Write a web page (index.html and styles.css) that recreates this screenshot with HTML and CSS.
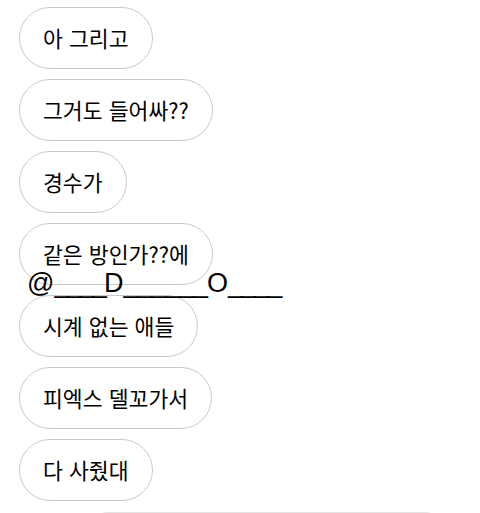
FILE: index.html
```html
<!DOCTYPE html>
<html lang="ko">
<head>
<meta charset="utf-8">
<link rel="stylesheet" href="styles.css">
</head>
<body>
<div class="chat">
  <div class="bubble">아 그리고</div>
  <div class="bubble">그거도 들어싸??</div>
  <div class="bubble">경수가</div>
  <div class="bubble">같은 방인가??에</div>
  <div class="bubble">시계 없는 애들</div>
  <div class="bubble">피엑스 델꼬가서</div>
  <div class="bubble">다 사줬대</div>
  <div class="outgoing"></div>
  <div class="overlay">@<span class="u u1">____</span>D<span class="u u2">______</span>O<span class="u u3">____</span></div>
</div>
</body>
</html>
```

FILE: styles.css
```css
html, body {
  margin: 0;
  padding: 0;
  background: #ffffff;
  overflow: hidden;
}
.chat {
  position: relative;
  display: flex;
  flex-direction: column;
  align-items: flex-start;
  gap: 10px;
  padding: 7px 0 0 19px;
  font-family: "Noto Sans CJK KR", "Noto Sans", sans-serif;
}
.bubble {
  box-sizing: border-box;
  height: 62px;
  padding: 0 23px;
  border: 1px solid #c9c9c9;
  border-radius: 31px;
  background: #fff;
  color: #000;
  font-size: 21.6px;
  line-height: 60px;
  white-space: nowrap;
}
.outgoing {
  margin-left: 69px;
  margin-top: 1px;
  width: 355px;
  height: 40px;
  border: 1px solid #e3e3e3;
  border-radius: 20px;
  background: #fbfbfb;
}
.overlay {
  position: absolute;
  left: 27px;
  top: 268px;
  font-family: "Liberation Sans", Arial, sans-serif;
  font-size: 27px;
  line-height: 31px;
  color: #000;
  white-space: nowrap;
}
.u1 { letter-spacing: -2.6px; }
.u2 { letter-spacing: -1.13px; }
.u3 { letter-spacing: -1.93px; }
```
